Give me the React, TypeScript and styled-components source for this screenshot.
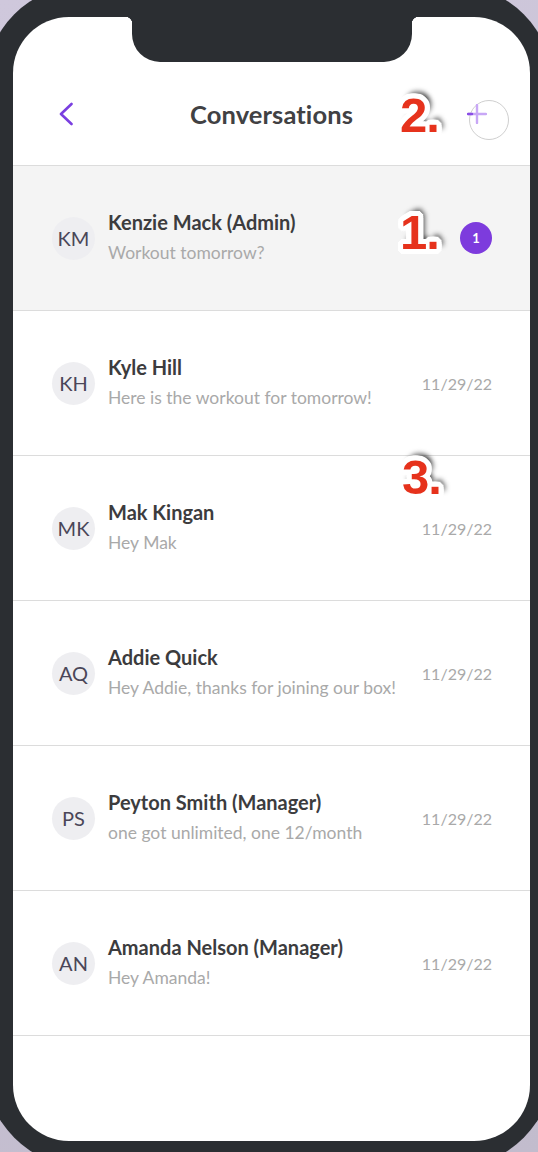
import React from "react"
import styled, { createGlobalStyle } from "styled-components"

const GlobalStyle = createGlobalStyle`
  html, body {
    margin: 0;
    padding: 0;
    overflow: hidden;
    background: linear-gradient(160deg, #cfc8dc 0%, #c2bccd 100%);
    font-family: "Lato", "Open Sans", sans-serif;
  }
  * {
    box-sizing: border-box;
  }
`

const Frame = styled.div`
  margin: -15px;
  width: 568px;
  height: 1182px;
  padding: 32px 23px 26px 28px;
  background: #2b2e32;
  border-radius: 100px;
`

const Screen = styled.div`
  position: relative;
  height: 100%;
  background: #ffffff;
  border-radius: 56px;
  overflow: hidden;
  display: flex;
  flex-direction: column;
`

const Notch = styled.div`
  position: absolute;
  top: 0;
  left: 119px;
  width: 280px;
  height: 45px;
  background: #2b2e32;
  border-radius: 0 0 28px 28px;

  &::before,
  &::after {
    content: "";
    position: absolute;
    top: 0;
    width: 7px;
    height: 7px;
  }
  &::before {
    left: -7px;
    background: radial-gradient(circle at 0 100%, transparent 7px, #2b2e32 7.5px);
  }
  &::after {
    right: -7px;
    background: radial-gradient(circle at 100% 100%, transparent 7px, #2b2e32 7.5px);
  }
`

const Header = styled.header`
  height: 149px;
  padding: 77px 21px 0 21px;
  border-bottom: 1px solid #dcdcdc;
  display: grid;
  grid-template-columns: 1fr auto 1fr;
  align-items: start;
`

const BackButton = styled.button`
  height: 40px;
  width: 20px;
  margin-left: 25px;
  padding: 0;
  border: none;
  background: none;
  display: flex;
  align-items: center;
  justify-content: flex-start;
  justify-self: start;
`

const Title = styled.h1`
  margin: 0;
  font-size: 25.5px;
  line-height: 40px;
  font-weight: 700;
  color: #414143;
  letter-spacing: 0.1px;
`

const AddButton = styled.button`
  justify-self: end;
  margin-top: 6px;
  width: 40px;
  height: 40px;
  padding: 0;
  border: 1px solid #cfcfcf;
  border-radius: 50%;
  background: #ffffff;
  display: flex;
  align-items: center;
  justify-content: center;

  svg {
    transform: translate(-12px, -6px);
  }
`

const List = styled.ul`
  margin: 0;
  padding: 0;
  list-style: none;
`

const Row = styled.li<{ $active?: boolean }>`
  height: 145px;
  padding: 0 38px 0 39px;
  border-bottom: 1px solid #dcdcdc;
  background: ${(p) => (p.$active ? "#f4f4f4" : "#ffffff")};
  display: flex;
  align-items: center;
`

const Avatar = styled.div`
  flex: none;
  width: 43px;
  height: 43px;
  border-radius: 50%;
  background: #eeeef1;
  color: #4a4658;
  font-size: 20px;
  display: flex;
  align-items: center;
  justify-content: center;
  margin-right: 13px;
`

const Body = styled.div`
  flex: 1;
  min-width: 0;
  display: flex;
  flex-direction: column;
  gap: 6px;
  margin-top: -3px;
`

const Name = styled.div`
  font-size: 20px;
  line-height: 26px;
  font-weight: 700;
  color: #3c3c3e;
`

const Preview = styled.div`
  font-size: 17.5px;
  line-height: 24px;
  color: #a9a9a9;
  white-space: nowrap;
`

const Date = styled.div`
  flex: none;
  font-size: 16px;
  color: #a9a9a9;
`

const Badge = styled.div`
  flex: none;
  width: 32px;
  height: 32px;
  border-radius: 50%;
  background: #7d3bdd;
  color: #ffffff;
  font-size: 13px;
  font-weight: 700;
  display: flex;
  align-items: center;
  justify-content: center;
`

const Marker = styled.span<{ $x: number; $y: number }>`
  position: absolute;
  left: ${(p) => p.$x}px;
  top: ${(p) => p.$y}px;
  font-family: "Liberation Sans", Arial, sans-serif;
  font-weight: 700;
  font-size: 49px;
  line-height: 1;
  letter-spacing: -1px;
  color: #e6321c;
  text-shadow:
    5px 0 0 #fff, -5px 0 0 #fff, 0 5px 0 #fff, 0 -5px 0 #fff,
    4px 3px 0 #fff, -4px 3px 0 #fff, 4px -3px 0 #fff, -4px -3px 0 #fff,
    3px 4px 0 #fff, -3px 4px 0 #fff, 3px -4px 0 #fff, -3px -4px 0 #fff,
    5px 2px 0 #fff, -5px 2px 0 #fff, 5px -2px 0 #fff, -5px -2px 0 #fff,
    2px 5px 0 #fff, -2px 5px 0 #fff, 2px -5px 0 #fff, -2px -5px 0 #fff,
    4px -7px 5px rgba(0, 0, 0, 0.6), 7px -3px 5px rgba(0, 0, 0, 0.45);
`

const conversations = [
  { initials: "KM", name: "Kenzie Mack (Admin)", preview: "Workout tomorrow?", unread: 1 },
  { initials: "KH", name: "Kyle Hill", preview: "Here is the workout for tomorrow!", date: "11/29/22" },
  { initials: "MK", name: "Mak Kingan", preview: "Hey Mak", date: "11/29/22" },
  { initials: "AQ", name: "Addie Quick", preview: "Hey Addie, thanks for joining our box!", date: "11/29/22" },
  { initials: "PS", name: "Peyton Smith (Manager)", preview: "one got unlimited, one 12/month", date: "11/29/22" },
  { initials: "AN", name: "Amanda Nelson (Manager)", preview: "Hey Amanda!", date: "11/29/22" },
]

const App: React.FC = () => (
  <>
    <GlobalStyle />
    <Frame>
      <Screen>
        <Notch />
        <Header>
          <BackButton aria-label="Back">
            <svg width="14" height="24" viewBox="0 0 14 24" fill="none">
              <path d="M12.5 2 L2 12 L12.5 22" stroke="#7a3fe0" strokeWidth="2.6" strokeLinecap="round" strokeLinejoin="round" />
            </svg>
          </BackButton>
          <Title>Conversations</Title>
          <AddButton aria-label="New conversation">
            <svg width="20" height="20" viewBox="0 0 20 20" fill="none">
              <path d="M10 1 V19 M1 10 H19" stroke="#c8a7f6" strokeWidth="2.4" strokeLinecap="round" />
              <path d="M1 10 H5" stroke="#8a4ee6" strokeWidth="2.4" strokeLinecap="round" />
            </svg>
          </AddButton>
        </Header>
        <List>
          {conversations.map((c, i) => (
            <Row key={c.initials} $active={i === 0}>
              <Avatar>{c.initials}</Avatar>
              <Body>
                <Name>{c.name}</Name>
                <Preview>{c.preview}</Preview>
              </Body>
              {c.unread ? <Badge>{c.unread}</Badge> : <Date>{c.date}</Date>}
            </Row>
          ))}
        </List>
        <Marker $x={387} $y={74}>2.</Marker>
        <Marker $x={387} $y={191}>1.</Marker>
        <Marker $x={389} $y={436}>3.</Marker>
      </Screen>
    </Frame>
  </>
)

export default App
